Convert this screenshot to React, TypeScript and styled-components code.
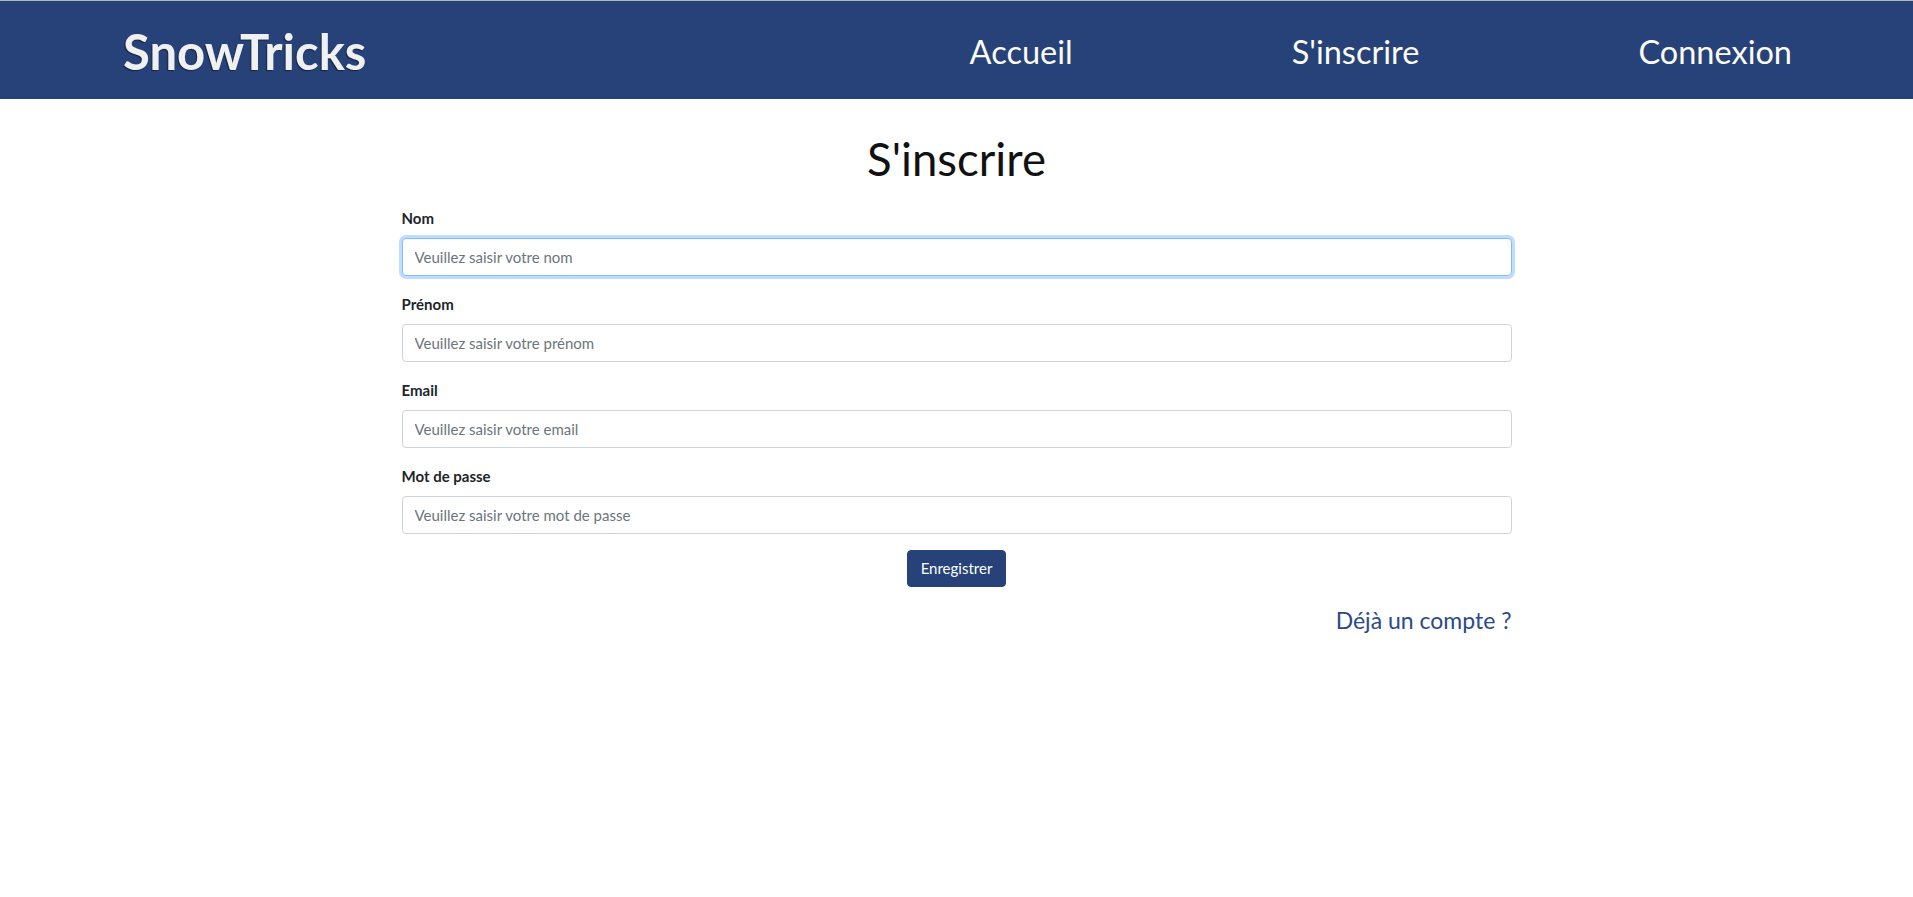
import React from "react";
import styled, { createGlobalStyle } from "styled-components";

const Global = createGlobalStyle`
  * { box-sizing: border-box; }
  html, body { margin: 0; padding: 0; background: #fff; }
  body { font-family: Lato, "Open Sans", sans-serif; color: #212529; }
`;

const Page = styled.div`
  min-height: 897px;
  border-top: 1px solid #b5b5b5;
`;

const Header = styled.header`
  height: 98px;
  background: #264278;
  display: flex;
  align-items: center;
  justify-content: space-between;
  padding: 0 121px 0 123px;
`;

const Brand = styled.a`
  font-family: Lato, sans-serif;
  font-weight: 700;
  font-size: 49px;
  color: #f0f0f0;
  text-decoration: none;
  text-shadow: -1px 1px 1px rgba(0, 0, 0, 0.45);
  margin-top: 2px;
`;

const Nav = styled.nav`
  display: flex;
  align-items: center;
  gap: 219px;
  margin-top: 2px;
`;

const NavLink = styled.a`
  font-family: Lato, sans-serif;
  font-size: 32.5px;
  color: #fbfbf2;
  text-decoration: none;
`;

const Main = styled.main`
  width: 1110px;
  margin: 0 auto;
  display: flex;
  flex-direction: column;
`;

const Title = styled.h1`
  margin: 33px 0 19px;
  text-align: center;
  font-family: Lato, sans-serif;
  font-weight: 400;
  font-size: 45.5px;
  line-height: 1.2;
  color: #111;
`;

const Group = styled.div`
  display: flex;
  flex-direction: column;
  margin-bottom: 16px;
`;

const Label = styled.label`
  font-family: Lato, sans-serif;
  font-weight: 700;
  font-size: 15px;
  line-height: 24px;
  margin-bottom: 8px;
  color: #212529;
`;

const Input = styled.input<{ $active?: boolean }>`
  height: 38px;
  width: 100%;
  padding: 6px 12px;
  font-family: Lato, sans-serif;
  font-size: 15px;
  color: #495057;
  background: #fff;
  border: 1px solid ${(p) => (p.$active ? "#80bdff" : "#ced4da")};
  border-radius: 4px;
  outline: none;
  box-shadow: ${(p) => (p.$active ? "0 0 0 3px rgba(0,123,255,.25)" : "none")};
  &::placeholder { color: #6c757d; }
`;

const Actions = styled.div`
  display: flex;
  justify-content: center;
`;

const Button = styled.button`
  height: 37px;
  padding: 0 13px;
  font-family: Lato, sans-serif;
  font-size: 15px;
  color: #fff;
  background: #264278;
  border: 1px solid #264278;
  border-radius: 4px;
`;

const Footer = styled.div`
  display: flex;
  justify-content: flex-end;
  margin-top: 16px;
`;

const Link = styled.a`
  font-family: Lato, sans-serif;
  font-size: 23px;
  line-height: 1.5;
  color: #2b4a86;
  text-decoration: none;
`;

const fields = [
  { label: "Nom", placeholder: "Veuillez saisir votre nom", type: "text" },
  { label: "Prénom", placeholder: "Veuillez saisir votre prénom", type: "text" },
  { label: "Email", placeholder: "Veuillez saisir votre email", type: "email" },
  { label: "Mot de passe", placeholder: "Veuillez saisir votre mot de passe", type: "password" },
];

export default function App() {
  return (
    <Page>
      <Global />
      <Header>
        <Brand href="#">SnowTricks</Brand>
        <Nav>
          <NavLink href="#">Accueil</NavLink>
          <NavLink href="#">S'inscrire</NavLink>
          <NavLink href="#">Connexion</NavLink>
        </Nav>
      </Header>
      <Main>
        <Title>S'inscrire</Title>
        <form onSubmit={(e) => e.preventDefault()}>
          {fields.map((f, i) => (
            <Group key={f.label}>
              <Label>{f.label}</Label>
              <Input type={f.type} placeholder={f.placeholder} $active={i === 0} />
            </Group>
          ))}
          <Actions>
            <Button type="submit">Enregistrer</Button>
          </Actions>
        </form>
        <Footer>
          <Link href="#">Déjà un compte ?</Link>
        </Footer>
      </Main>
    </Page>
  );
}
